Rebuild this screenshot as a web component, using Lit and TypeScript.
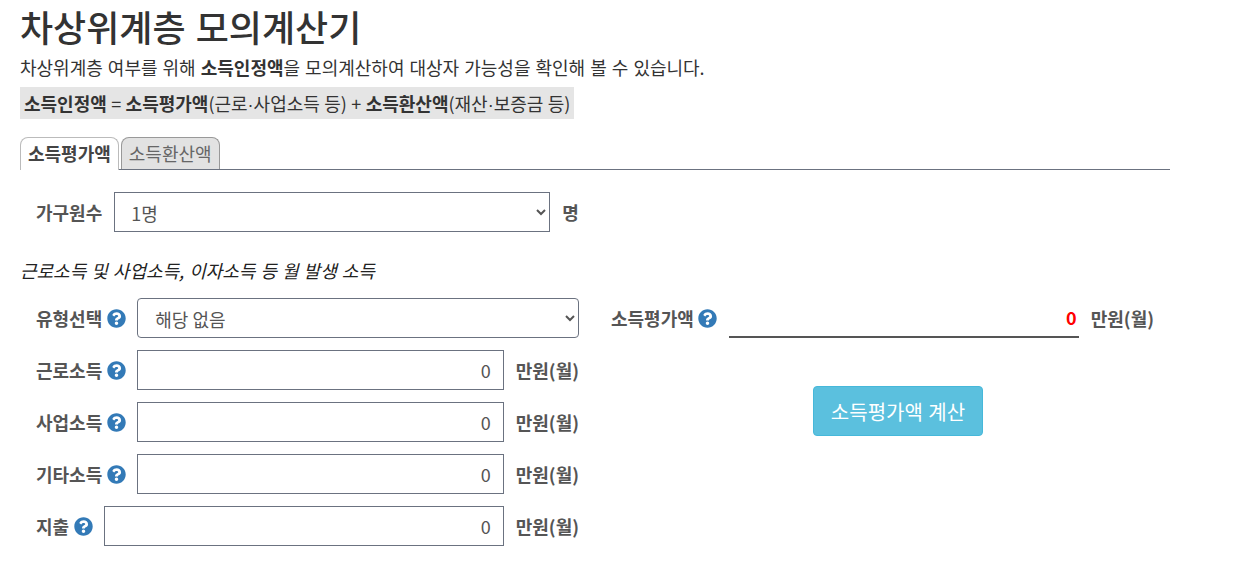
import { LitElement, html, css, svg } from "lit";
import { customElement } from "lit/decorators.js";

const help = html`<svg class="help" viewBox="0 0 512 512" aria-hidden="true">${svg`<path fill="#337ab7" d="M504 256c0 136.997-111.043 248-248 248S8 392.997 8 256C8 119.083 119.043 8 256 8s248 111.083 248 248zM262.655 90c-54.497 0-89.255 22.957-116.549 63.758-3.536 5.286-2.353 12.415 2.715 16.258l34.699 26.31c5.205 3.947 12.621 3.008 16.665-2.122 17.864-22.658 30.113-35.797 57.303-35.797 20.429 0 45.698 13.148 45.698 32.958 0 14.976-12.363 22.667-32.534 33.976C247.128 238.528 216 254.941 216 296v4c0 6.627 5.373 12 12 12h56c6.627 0 12-5.373 12-12v-1.333c0-28.462 83.186-29.647 83.186-106.667 0-58.002-60.165-102-116.531-102zM256 338c-25.365 0-46 20.635-46 46 0 25.364 20.635 46 46 46s46-20.636 46-46c0-25.365-20.635-46-46-46z"/>`}</svg>`;

@customElement("app-root")
export class AppRoot extends LitElement {
  static styles = css`
    :host {
      display: block;
      font-family: "Noto Sans CJK KR", "Noto Sans", sans-serif;
      font-size: 18px;
      color: #333;
      background: #fff;
      height: 565px;
      overflow: hidden;
    }
    .page { width: 1150px; margin-left: 20px; }
    h1 {
      margin: 0;
      padding-top: 3px;
      height: 47px;
      font-size: 36px;
      line-height: 46px;
      font-weight: 500;
      color: #333;
      word-spacing: 2px;
    }
    .intro { margin: 0; line-height: 24px; padding-top: 5px; word-spacing: 1px; white-space: nowrap; }
    .formula {
      display: inline-block;
      margin-top: 8px;
      background: #e5e5e5;
      padding: 0 4px;
      line-height: 32px;
      height: 32px;
      white-space: nowrap;
      word-spacing: 0.35px;
      vertical-align: top;
    }
    .dot { font-family: "Liberation Sans", sans-serif; }
    b { font-weight: 700; }
    .tabs {
      display: flex;
      gap: 2px;
      margin-top: 18px;
      height: 32px;
      border-bottom: 1px solid #6b7280;
      align-items: flex-end;
    }
    .tab {
      box-sizing: border-box;
      height: 32px;
      padding: 0 7px;
      border: 1px solid #bbb;
      border-bottom: 0;
      border-radius: 8px 8px 0 0;
      line-height: 30px;
      white-space: nowrap;
    }
    .tab.on { background: #fff; font-weight: 700; color: #444; height: 33px; margin-bottom: -1px; }
    .tab.off { background: #e2e2e2; color: #666; border-color: #999; }
    .members {
      display: flex;
      align-items: center;
      padding: 22px 0 0 16px;
      height: 40px;
    }
    .lbl {
      font-weight: 700;
      color: #555;
      display: flex;
      align-items: center;
      gap: 5px;
      white-space: nowrap;
      line-height: 24px;
    }
    .members .lbl { margin-right: 12px; }
    select, input {
      box-sizing: border-box;
      height: 40px;
      font: inherit;
      color: #555;
      background: #fff;
      border: 1px solid #6b7280;
      border-radius: 0;
      outline: none;
    }
    select { padding: 2px 0 0 12px; }
    .members select { width: 436px; }
    .u { font-weight: 700; color: #555; white-space: nowrap; margin-left: 12px; }
    .note {
      margin: 0;
      padding-top: 26px;
      font-style: italic;
      line-height: 24px;
      color: #222;
      word-spacing: 1px;
      white-space: nowrap;
    }
    .cols { display: flex; margin-top: 16px; }
    .left {
      width: 543px;
      margin-left: 16px;
      display: flex;
      flex-direction: column;
      gap: 12px;
    }
    .row { display: flex; align-items: center; height: 40px; }
    .row .lbl { margin-right: 11px; }
    .row select { flex: 1; min-width: 0; border-radius: 4px; padding-left: 13px; }
    .row input { flex: 1; min-width: 0; text-align: right; padding: 0 12px 0 0; }
    .right {
      margin-left: 32px;
      width: 543px;
      display: flex;
      flex-direction: column;
    }
    .help { width: 19px; height: 19px; flex: none; }
    .out { flex: 1; min-width: 0; height: 40px; display: flex; align-items: center; justify-content: flex-end;
      border-bottom: 2px solid #555; box-sizing: border-box; color: #f00; font-weight: 700; padding-right: 2px; }
    .right .lbl { margin-right: 12px; gap: 4px; }
    .btnwrap { display: flex; justify-content: center; padding: 48px 0 0 31px; }
    button {
      width: 170px;
      height: 50px;
      font: inherit;
      font-size: 20px;
      word-spacing: 1px;
      color: #fff;
      background: #5bc0de;
      border: 1px solid #46b8da;
      border-radius: 4px;
    }
  `;

  render() {
    const fields = ["근로소득", "사업소득", "기타소득", "지출"];
    return html`<div class="page">
      <h1>차상위계층 모의계산기</h1>
      <p class="intro">차상위계층 여부를 위해 <b>소득인정액</b>을 모의계산하여 대상자 가능성을 확인해 볼 수 있습니다.</p>
      <div class="formula"><b>소득인정액</b> = <b>소득평가액</b>(근로<span class="dot">·</span>사업소득 등) + <b>소득환산액</b>(재산<span class="dot">·</span>보증금 등)</div>
      <div class="tabs">
        <div class="tab on">소득평가액</div>
        <div class="tab off">소득환산액</div>
      </div>
      <div class="members">
        <span class="lbl">가구원수</span>
        <select><option>1명</option></select>
        <span class="u">명</span>
      </div>
      <p class="note">근로소득 및 사업소득, 이자소득 등 월 발생 소득</p>
      <div class="cols">
        <div class="left">
          <div class="row">
            <span class="lbl">유형선택 ${help}</span>
            <select><option>해당 없음</option></select>
          </div>
          ${fields.map(
            (n) => html`<div class="row">
              <span class="lbl">${n} ${help}</span>
              <input value="0" />
              <span class="u">만원(월)</span>
            </div>`
          )}
        </div>
        <div class="right">
          <div class="row">
            <span class="lbl">소득평가액 ${help}</span>
            <div class="out">0</div>
            <span class="u">만원(월)</span>
          </div>
          <div class="btnwrap"><button>소득평가액 계산</button></div>
        </div>
      </div>
    </div>`;
  }
}
